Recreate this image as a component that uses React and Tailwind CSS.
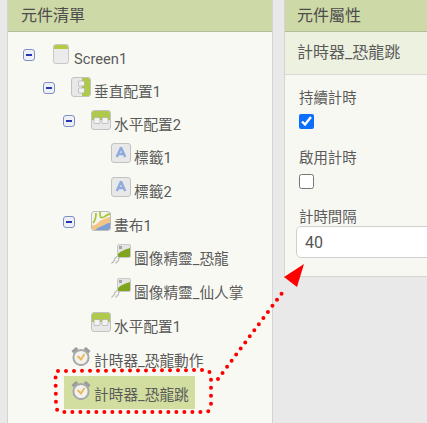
const Minus = () => (
  <span className="mt-[9px] flex h-[12px] w-[12px] items-center justify-center rounded-[3px] border border-[#7f8fc4] bg-[#eef0f6]">
    <span className="h-[2px] w-[6px] bg-[#2436b8]" />
  </span>
);

const Frame = ({ children }) => (
  <svg width="20" height="20" viewBox="0 0 20 20">
    <rect x="0.5" y="0.5" width="19" height="19" rx="2.5" fill="#e8e8e8" stroke="#c2c2c2" />
    {children}
  </svg>
);

const ScreenIcon = () => (
  <svg width="20" height="20" viewBox="0 0 20 20">
    <rect x="2.5" y="0.5" width="15" height="19" rx="2" fill="#ebebeb" stroke="#c8c8c8" />
    <path d="M3 3 a2 2 0 0 1 2 -2 h10 a2 2 0 0 1 2 2 v2 H3 z" fill="#b3cc45" />
  </svg>
);

const VerticalIcon = () => (
  <Frame>
    <path d="M11 1 h6 a2 2 0 0 1 2 2 v14 a2 2 0 0 1 -2 2 h-6 z" fill="#afc94a" />
    <rect x="7.5" y="4" width="6" height="5" rx="1" fill="#f2f2f2" stroke="#a5a5a5" strokeWidth="0.6" />
    <rect x="7.5" y="11" width="6" height="5" rx="1" fill="#f2f2f2" stroke="#a5a5a5" strokeWidth="0.6" />
  </Frame>
);

const HorizontalIcon = () => (
  <Frame>
    <path d="M1 10 v-7 a2 2 0 0 1 2 -2 h14 a2 2 0 0 1 2 2 v7 z" fill="#afc94a" />
    <rect x="3" y="7.5" width="6" height="6" rx="1" fill="#f2f2f2" stroke="#a5a5a5" strokeWidth="0.6" />
    <rect x="11" y="7.5" width="6" height="6" rx="1" fill="#f2f2f2" stroke="#a5a5a5" strokeWidth="0.6" />
  </Frame>
);

const LabelIcon = () => (
  <Frame>
    <path d="M5.8 14 L10 4.5 L14.2 14 M7.4 11 H12.6" fill="none" stroke="#8fabdd" strokeWidth="2.4" strokeLinejoin="bevel" />
  </Frame>
);

const CanvasIcon = () => (
  <svg width="20" height="20" viewBox="0 0 20 20">
    <rect x="0.5" y="0.5" width="19" height="19" rx="2.5" fill="#f4f4f0" stroke="#bdbdbd" />
    <path d="M1 14 C6 15 7 10 11 9 C14 8 16 6 19 6 V12 C15 12 14 14 11 15 C8 16 6 17 4 19 H3 a2 2 0 0 1 -2 -2 z" fill="#f3c584" />
    <path d="M4 19 C6 17 8 16 11 15 C14 14 15 12 19 12 V17 a2 2 0 0 1 -2 2 z" fill="#7f9fd0" />
    <path d="M5 2 C5 7 4 10 2 12 M9 1 C9 5 9 8 13 6 C15 5 16 3 19 3" fill="none" stroke="#a9c63c" strokeWidth="1.8" />
  </svg>
);

const SpriteIcon = () => (
  <svg width="20" height="20" viewBox="0 0 20 20">
    <path d="M0.5 19.5 L4 16 M4.5 19.5 L8 16 M3 15.5 L6 12.5 M7 15.5 L10 12.5" stroke="#bdbdbd" strokeWidth="1.2" />
    <rect x="6.5" y="0.5" width="13" height="13" rx="1.5" fill="#e4e4e4" stroke="#c8c8c8" />
    <path d="M7 13 V10 C10 7 13 6 19 4 V12 a1 1 0 0 1 -1 1 z" fill="#7fa51f" />
    <rect x="8" y="2" width="3" height="3" fill="#a5a5a5" />
  </svg>
);

const TimerIcon = () => (
  <svg width="20" height="20" viewBox="0 0 20 20">
    <path d="M0.5 5 L5 1 L7.5 3 L2.5 7.5 z M19.5 5 L15 1 L12.5 3 L17.5 7.5 z" fill="#9c9c9c" />
    <circle cx="10" cy="11.5" r="7.6" fill="#f2f2ee" stroke="#a8a8a8" strokeWidth="2" />
    <path d="M6.5 10 L10 13.5 L13.5 8" fill="none" stroke="#f0b85c" strokeWidth="2" />
  </svg>
);

const rows = [
  { h: 'h-[33px]', pl: 'pl-[15px]', toggle: true, icon: <ScreenIcon />, text: 'Screen1' },
  { h: 'h-[33px]', pl: 'pl-[35px]', toggle: true, icon: <VerticalIcon />, text: '垂直配置1' },
  { h: 'h-[33px]', pl: 'pl-[55px]', toggle: true, icon: <HorizontalIcon />, text: '水平配置2' },
  { h: 'h-[34px]', pl: 'pl-[96px]', icon: <LabelIcon />, text: '標籤1' },
  { h: 'h-[34px]', pl: 'pl-[96px]', icon: <LabelIcon />, text: '標籤2' },
  { h: 'h-[33px]', pl: 'pl-[55px]', toggle: true, icon: <CanvasIcon />, text: '畫布1' },
  { h: 'h-[34px]', pl: 'pl-[96px]', icon: <SpriteIcon />, text: '圖像精靈_恐龍' },
  { h: 'h-[34px]', pl: 'pl-[96px]', icon: <SpriteIcon />, text: '圖像精靈_仙人掌' },
  { h: 'h-[34px]', pl: 'pl-[76px]', icon: <HorizontalIcon />, text: '水平配置1' },
  { h: 'h-[34px]', pl: 'pl-[56px]', icon: <TimerIcon />, text: '計時器_恐龍動作' },
  { h: 'h-[33px]', pl: 'pl-[56px]', icon: <TimerIcon />, text: '計時器_恐龍跳', selected: true },
];

const TreeRow = ({ row }) => (
  <div className={`flex items-start ${row.h} ${row.pl}`}>
    {row.toggle && (
      <div className="w-[21px] shrink-0">
        <Minus />
      </div>
    )}
    <div className={`flex h-[33px] items-start gap-[3px] pr-[6px] pl-[7px] ${row.selected ? 'bg-[#d2de9f]' : ''}`}>
      <div className="mt-[4px] shrink-0">{row.icon}</div>
      <span className="mt-[8px] text-[14.7px] leading-[22px] whitespace-nowrap">{row.text}</span>
    </div>
  </div>
);

const App = () => {
  return (
    <div className="relative flex h-[423px] w-[427px] overflow-hidden bg-[#e9e9e9] font-['Roboto','Noto_Sans_CJK_TC',sans-serif] text-[#5a5a5a]">
      <div className="ml-[7px] flex w-[266px] shrink-0 flex-col border-x border-[#d4d4d4] bg-[#f9f9f3]">
        <div className="flex h-[32px] shrink-0 items-center border-b border-[#b4bc9c] bg-[#cdd9a7] pl-[13px] text-[16px] text-[#4d4d4d]">
          元件清單
        </div>
        <div className="pt-[8px]">
          {rows.map((row) => (
            <TreeRow key={row.text} row={row} />
          ))}
        </div>
      </div>

      <div className="ml-[11px] flex h-[277px] min-w-0 flex-1 flex-col overflow-hidden border-b border-l border-[#d4d4d4] bg-[#f8f8f3]">
        <div className="flex h-[32px] shrink-0 items-center border-b border-[#b4bc9c] bg-[#cdd9a7] pl-[12px] text-[16px] text-[#4d4d4d]">
          元件屬性
        </div>
        <div className="flex h-[43px] shrink-0 items-center border-b border-[#d8d8d8] bg-[#edf1e0] pl-[12px] text-[16px]">
          計時器_恐龍跳
        </div>
        <div className="pl-[14px] pt-[13px] text-[14.4px] leading-[22px]">
          <div>持續計時</div>
          <div className="mt-[4px] h-[15px] w-[15px]">
            <input type="checkbox" defaultChecked className="block h-[15px] w-[15px] accent-[#0d6efd]" />
          </div>
          <div className="mt-[19px]">啟用計時</div>
          <div className="mt-[4px] h-[15px] w-[15px]">
            <input type="checkbox" className="block h-[15px] w-[15px]" />
          </div>
          <div className="mt-[18px]">計時間隔</div>
          <input
            type="text"
            defaultValue="40"
            className="-mt-[3px] -ml-[3px] h-[32px] w-[170px] rounded-[5px] border border-[#cfcfcf] bg-white pl-[8px] text-[16px] text-[#555]"
          />
        </div>
      </div>

      <svg className="pointer-events-none absolute top-0 left-0" width="427" height="423" viewBox="0 0 427 423">
        <path
          d="M58 371 L206 370 Q211 371 211 378 L211 405 Q210 412 206 412 L62 412 Q56 412 56 405 L55.5 378 Q56 372 58 371 Z"
          fill="none"
          stroke="#ff0000"
          strokeWidth="4"
          strokeLinecap="round"
          strokeDasharray="0 8"
        />
        <path d="M218 379 L285 289" fill="none" stroke="#ff0000" strokeWidth="4" strokeLinecap="round" strokeDasharray="0 7.6" />
        <polygon points="304,264 284,277 297,287" fill="#ff0000" />
      </svg>
    </div>
  );
};

export default App;
